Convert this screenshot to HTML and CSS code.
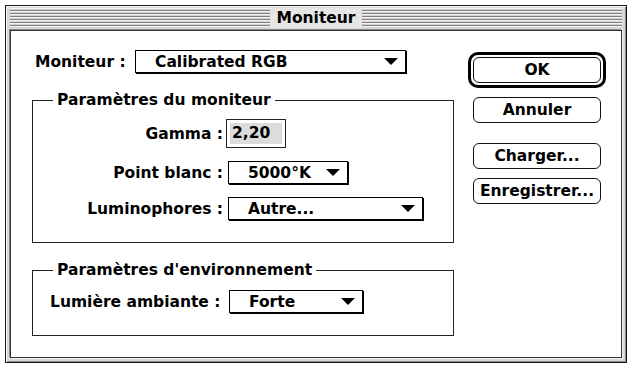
FILE: index.html
```html
<!DOCTYPE html>
<html lang="fr">
<head>
    <meta charset="UTF-8">
    <title>Moniteur</title>
    <link rel="stylesheet" href="styles.css">
</head>
<body>
<div class="window">
    <div class="titlebar">
        <div class="stripes"><span class="title">Moniteur</span></div>
    </div>
    <div class="content">
        <div class="main">
            <div class="top-row">
                <span class="label">Moniteur :</span>
                <div class="popup w-monitor">
                    <span>Calibrated RGB</span>
                    <svg class="arrow" width="14" height="7" viewBox="0 0 14 7"><polygon points="0,0 14,0 7,7"/></svg>
                </div>
            </div>

            <fieldset class="group group-monitor">
                <legend>Paramètres du moniteur</legend>
                <div class="form-grid">
                    <span class="label">Gamma :</span>
                    <div class="field"><span class="selected">2,20</span></div>

                    <span class="label">Point blanc :</span>
                    <div class="popup w-white">
                        <span>5000°K</span>
                        <svg class="arrow" width="14" height="7" viewBox="0 0 14 7"><polygon points="0,0 14,0 7,7"/></svg>
                    </div>

                    <span class="label">Luminophores :</span>
                    <div class="popup w-phos">
                        <span>Autre...</span>
                        <svg class="arrow" width="14" height="7" viewBox="0 0 14 7"><polygon points="0,0 14,0 7,7"/></svg>
                    </div>
                </div>
            </fieldset>

            <fieldset class="group group-env">
                <legend>Paramètres d'environnement</legend>
                <div class="env-row">
                    <span class="label">Lumière ambiante :</span>
                    <div class="popup w-light">
                        <span>Forte</span>
                        <svg class="arrow" width="14" height="7" viewBox="0 0 14 7"><polygon points="0,0 14,0 7,7"/></svg>
                    </div>
                </div>
            </fieldset>
        </div>

        <div class="buttons">
            <div class="default-ring"><button class="btn">OK</button></div>
            <button class="btn">Annuler</button>
            <button class="btn btn-load">Charger...</button>
            <button class="btn">Enregistrer...</button>
        </div>
    </div>
</div>
</body>
</html>
```

FILE: styles.css
```css
* {
    box-sizing: border-box;
}

body {
    margin: 0;
    background: #fff;
    font-family: "DejaVu Sans", "Liberation Sans", sans-serif;
    font-weight: bold;
    font-size: 15.5px;
    color: #000;
}

/* fenetre */
.window {
    width: 622px;
    height: 358px;
    margin: 5px 0 0 5px;
    border: 1px solid #1a1a1a;
    background: #d8d8d8;
    box-shadow: inset 1px 1px 0 #f6f6f6, inset -1px -1px 0 #8a8a8a;
    padding: 0 4px 4px 4px;
    display: flex;
    flex-direction: column;
}

.titlebar {
    height: 24px;
    padding: 2px 0;
}

.stripes {
    height: 20px;
    display: flex;
    justify-content: center;
    align-items: center;
    background-color: #d0d0d0;
    background-image: repeating-linear-gradient(180deg, #f4f4f4 0px, #f4f4f4 1px, #d2d2d2 1px, #d2d2d2 2px, #808080 2px, #808080 3px);
}

.title {
    background: #e6e6e6;
    padding: 0 6px;
    line-height: 20px;
    font-size: 15.5px;
}

.content {
    flex: 1;
    background: #fff;
    border: 1px solid #333;
    box-shadow: 1px 1px 0 #f4f4f4, -1px -1px 0 #8a8a8a;
    display: flex;
    padding: 19px 15px 0 21px;
}

.main {
    width: 423px;
}

.label {
    white-space: nowrap;
}

.top-row {
    display: grid;
    grid-template-columns: 100px auto;
    align-items: center;
    margin-left: 3px;
}

/* menus deroulants */
.popup {
    height: 23px;
    border: 1px solid #000;
    box-shadow: 1px 1px 0 #000;
    background: #fff;
    display: flex;
    align-items: center;
    padding-left: 19px;
    white-space: nowrap;
}

.popup .arrow {
    margin-left: auto;
    margin-right: 7px;
    fill: #000;
}

.w-monitor { width: 271px; }
.w-white { width: 120px; }
.w-phos { width: 195px; }
.w-light { width: 134px; }

/* groupes */
.group {
    margin: 18px 0 0 0;
    padding: 0;
    min-width: 0;
    border: 1px solid #222;
}

.group legend {
    margin-left: 20px;
    padding: 0 4px;
    line-height: 18px;
}

.group-monitor {
    padding-bottom: 22px;
}

.form-grid {
    display: grid;
    grid-template-columns: 190px auto;
    column-gap: 3px;
    row-gap: 13px;
    align-items: center;
    justify-items: start;
    padding-top: 10px;
}

.form-grid .label {
    justify-self: end;
}

.form-grid .popup {
    margin-left: 2px;
}

.field {
    width: 60px;
    height: 29px;
    border: 1px solid #222;
    padding: 3px;
}

.selected {
    display: block;
    height: 21px;
    line-height: 21px;
    padding-left: 2px;
    background: #dcdcdc;
}

.group-env {
    padding: 11px 0 22px 0;
}

.env-row {
    display: grid;
    grid-template-columns: 174px auto;
    column-gap: 5px;
    align-items: center;
    padding-left: 17px;
}

/* boutons */
.buttons {
    margin-left: 14px;
    width: 138px;
    display: flex;
    flex-direction: column;
    align-items: center;
    padding-top: 2px;
}

.btn {
    width: 128px;
    height: 26px;
    border: 1px solid #111;
    border-radius: 6px;
    background: #fff;
    font-family: inherit;
    font-weight: bold;
    font-size: 15.5px;
    color: #000;
    padding: 0;
    margin-top: 9px;
    white-space: nowrap;
}

.default-ring {
    border: 3px solid #000;
    border-radius: 10px;
    padding: 2px;
    display: flex;
}

.default-ring .btn {
    margin-top: 0;
}

.btn-load {
    margin-top: 20px;
}
```
